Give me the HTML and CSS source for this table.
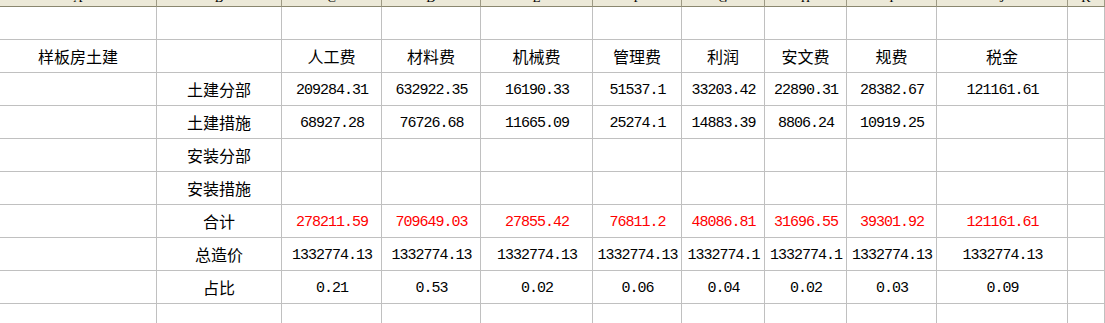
FILE: index.html
```html
<!DOCTYPE html>
<html lang="zh-CN">
<head>
<meta charset="utf-8">
<title>样板房土建</title>
<link rel="stylesheet" href="styles.css">
</head>
<body>
<div class="sheet">
  <div class="hd">A</div><div class="hd">B</div><div class="hd">C</div><div class="hd">D</div><div class="hd">E</div><div class="hd">F</div><div class="hd">G</div><div class="hd">H</div><div class="hd">I</div><div class="hd">J</div><div class="hd">K</div>

  <div class="c"></div><div class="c"></div><div class="c"></div><div class="c"></div><div class="c"></div><div class="c"></div><div class="c"></div><div class="c"></div><div class="c"></div><div class="c"></div><div class="c"></div>

  <div class="c">样板房土建</div><div class="c"></div><div class="c">人工费</div><div class="c">材料费</div><div class="c">机械费</div><div class="c">管理费</div><div class="c">利润</div><div class="c">安文费</div><div class="c">规费</div><div class="c">税金</div><div class="c"></div>

  <div class="c"></div><div class="c">土建分部</div><div class="c n">209284.31</div><div class="c n">632922.35</div><div class="c n">16190.33</div><div class="c n">51537.1</div><div class="c n">33203.42</div><div class="c n">22890.31</div><div class="c n">28382.67</div><div class="c n">121161.61</div><div class="c"></div>

  <div class="c"></div><div class="c">土建措施</div><div class="c n">68927.28</div><div class="c n">76726.68</div><div class="c n">11665.09</div><div class="c n">25274.1</div><div class="c n">14883.39</div><div class="c n">8806.24</div><div class="c n">10919.25</div><div class="c"></div><div class="c"></div>

  <div class="c"></div><div class="c">安装分部</div><div class="c"></div><div class="c"></div><div class="c"></div><div class="c"></div><div class="c"></div><div class="c"></div><div class="c"></div><div class="c"></div><div class="c"></div>

  <div class="c"></div><div class="c">安装措施</div><div class="c"></div><div class="c"></div><div class="c"></div><div class="c"></div><div class="c"></div><div class="c"></div><div class="c"></div><div class="c"></div><div class="c"></div>

  <div class="c"></div><div class="c">合计</div><div class="c n red">278211.59</div><div class="c n red">709649.03</div><div class="c n red">27855.42</div><div class="c n red">76811.2</div><div class="c n red">48086.81</div><div class="c n red">31696.55</div><div class="c n red">39301.92</div><div class="c n red">121161.61</div><div class="c"></div>

  <div class="c"></div><div class="c">总造价</div><div class="c n">1332774.13</div><div class="c n">1332774.13</div><div class="c n">1332774.13</div><div class="c n">1332774.13</div><div class="c n">1332774.1</div><div class="c n">1332774.1</div><div class="c n">1332774.13</div><div class="c n">1332774.13</div><div class="c"></div>

  <div class="c"></div><div class="c">占比</div><div class="c n">0.21</div><div class="c n">0.53</div><div class="c n">0.02</div><div class="c n">0.06</div><div class="c n">0.04</div><div class="c n">0.02</div><div class="c n">0.03</div><div class="c n">0.09</div><div class="c"></div>

  <div class="c"></div><div class="c"></div><div class="c"></div><div class="c"></div><div class="c"></div><div class="c"></div><div class="c"></div><div class="c"></div><div class="c"></div><div class="c"></div><div class="c"></div>
</div>
</body>
</html>
```

FILE: styles.css
```css
html, body {
  margin: 0;
  padding: 0;
  background: #ffffff;
  overflow: hidden;
}

.sheet {
  display: grid;
  grid-template-columns: 157px 125px 100px 99px 112px 89px 83px 82px 90px 131px 1fr;
  grid-template-rows: 7px repeat(10, 33px);
  width: 1105px;
  font-family: "Noto Sans CJK SC", "Liberation Sans", sans-serif;
  font-size: 16px;
  color: #000000;
}

.hd {
  background: #ece9d8;
  border-right: 1px solid #9d9a85;
  border-bottom: 1px solid #8a876f;
  height: 6px;
  overflow: hidden;
  display: flex;
  align-items: flex-end;
  justify-content: center;
  font-family: "Liberation Serif", serif;
  font-size: 13px;
  line-height: 16px;
  color: #000000;
}

.c {
  border-right: 1px solid #c0c0c0;
  border-bottom: 1px solid #c0c0c0;
  display: flex;
  align-items: center;
  justify-content: center;
  white-space: nowrap;
  overflow: hidden;
  line-height: 32px;
}

.n {
  font-family: "Liberation Mono", "DejaVu Sans Mono", monospace;
  font-size: 15px;
  letter-spacing: -1px;
  padding-left: 1px;
  padding-top: 4px;
  box-sizing: border-box;
}

.red {
  color: #ff0000;
}
```
